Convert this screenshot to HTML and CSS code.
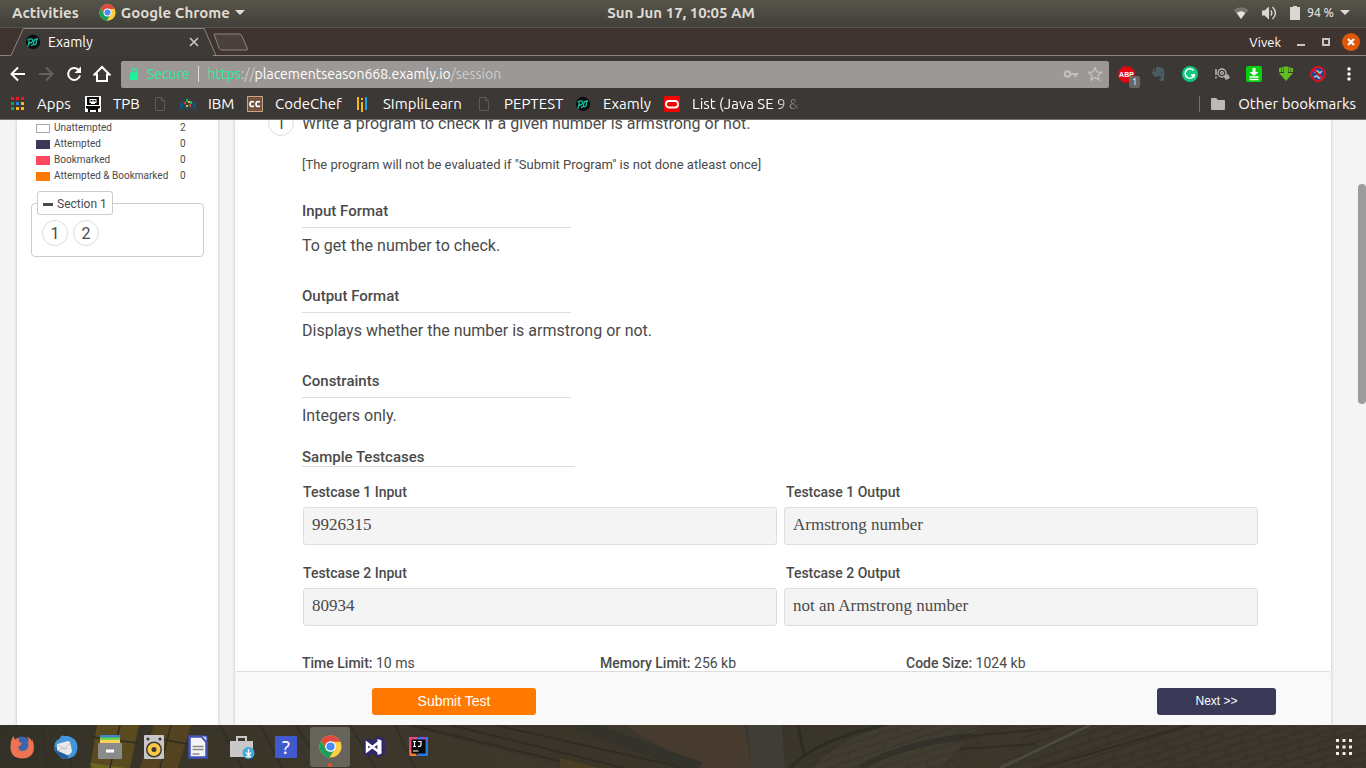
FILE: index.html
```html
<!DOCTYPE html>
<html lang="en">
<head>
<meta charset="utf-8">
<title>Examly</title>
<link rel="stylesheet" href="styles.css">
</head>
<body>
<svg class="defs" aria-hidden="true">
  <symbol id="chrome" viewBox="0 0 24 24">
    <circle cx="12" cy="12" r="11.5" fill="#fcce45"/>
    <path d="M2 6.2A11.5 11.5 0 0 1 22.300 7H12a5 5 0 0 0-4.600 7z" fill="#dd4b3e"/>
    <path d="M2 6.200A11.500 11.500 0 0 0 11 23.500L16.300 14.500A5 5 0 0 1 7.600 14.500z" fill="#1c9f5c"/>
    <circle cx="12" cy="12" r="5.600" fill="#fff"/><circle cx="12" cy="12" r="4.300" fill="#4a8af4"/>
  </symbol>
  <symbol id="examly" viewBox="0 0 16 16">
    <circle cx="8" cy="8" r="7.200" fill="#0b0e10"/>
    <path d="M3 12.300L4.300 7M3 6C4.500 4.500 8 4.300 7.600 6.600C7.300 8.500 5.500 9.300 4 9M6.500 11.300C8.500 11.500 8.700 9.500 8.800 7.500Q9.200 4.800 12.700 4.800M12.500 5C9.800 6.500 12.300 7.500 11.200 9.500Q10.500 11 9 10.500" fill="none" stroke="#19c7a8" stroke-width="1.200" stroke-linecap="round"/>
  </symbol>
  <symbol id="page" viewBox="0 0 16 16"><path d="M3.500 1.500h6l3 3.200v9.800h-9zM9.500 1.500v3.500h3" fill="none" stroke="#5c5a58"/></symbol>
</svg>

<header class="system">
  <div class="system-left">
    <button class="plain">Activities</button>
    <button class="plain app-menu"><svg width="17" height="17"><use href="#chrome"/></svg><span>Google Chrome</span><i class="caret"></i></button>
  </div>
  <time>Sun Jun 17, 10:05 AM</time>
  <div class="system-right">
    <svg width="16" height="16" viewBox="0 0 16 16"><path d="M.5 5Q8-.5 15.500 5L8 14z" fill="#777570"/><path d="M3.700 8Q8 4.500 12.300 8L8 14z" fill="#e4e2dc"/></svg>
    <svg width="16" height="16" viewBox="0 0 16 16" fill="none" stroke="#d9d7d1" stroke-width="1.400"><path d="M1 5.500h2.500L8 1.500v13L3.500 10.500H1z" fill="#d9d7d1" stroke="none"/><path d="M9.800 5.500q2 2.500 0 5M11.500 2q6 6 0 12"/></svg>
    <svg class="battery" width="12" height="16" viewBox="0 0 12 16"><path d="M1 2h3V1h4v1h3v13H1z" fill="#d9d7d1"/></svg>
    <span class="percent">94 %</span><i class="caret"></i>
  </div>
</header>

<div class="tabstrip">
  <svg class="tab-edge" width="24" height="28" viewBox="0 0 24 28"><path d="M11 28L23.500 0H24V28z" fill="#3e3a37"/><path d="M0 27.500H11L23.500 0" fill="none" stroke="#8b8581"/></svg>
  <div class="tab"><svg width="16" height="16"><use href="#examly"/></svg><span>Examly</span>
    <button class="plain" aria-label="Close tab"><svg width="10" height="10" viewBox="0 0 10 10"><path d="M1 1l8 8M9 1L1 9" stroke="#d0cecb" stroke-width="1.500"/></svg></button></div>
  <svg width="14" height="28" viewBox="0 0 14 28"><path d="M0 0L12 28H0z" fill="#3e3a37"/><path d="M0 0L12 27.500H14" fill="none" stroke="#8b8581"/></svg>
  <div class="strip-rest">
    <button class="plain" aria-label="New tab"><svg width="36" height="18" viewBox="0 0 36 18"><path d="M1 1H26q2 0 3 2L34.500 16q0 1-1 1H9q-2 0-3-2z" fill="#4a403d" stroke="#8b8581"/></svg></button>
    <div class="window-controls"><span>Vivek</span>
      <button class="plain" aria-label="Minimize"><svg width="10" height="10"><path d="M1 8h8" stroke="#c7c3be" stroke-width="2"/></svg></button>
      <button class="plain" aria-label="Maximize"><svg width="10" height="10"><path d="M2 2h6v6H2z" fill="none" stroke="#c7c3be" stroke-width="2"/></svg></button>
      <button class="plain" aria-label="Close"><svg width="18" height="18" viewBox="0 0 18 18"><circle cx="9" cy="9" r="9" fill="#df5707"/><path d="M6 6l6 6M12 6l-6 6" stroke="#fff" stroke-width="2.200"/></svg></button>
    </div>
  </div>
</div>

<nav class="toolbar">
  <div class="nav-buttons">
    <button class="plain" aria-label="Back"><svg width="18" height="18" viewBox="0 0 18 18"><path d="M16 9H3M9 2.500L2.500 9 9 15.500" fill="none" stroke="#fff" stroke-width="2"/></svg></button>
    <button class="plain" aria-label="Forward"><svg width="18" height="18" viewBox="0 0 18 18"><path d="M2 9h13M9 2.500L15.500 9 9 15.500" fill="none" stroke="#65615f" stroke-width="2"/></svg></button>
    <button class="plain" aria-label="Reload"><svg width="18" height="18" viewBox="0 0 18 18"><path d="M15 10.500A6 6 0 1 1 13.500 4.800" fill="none" stroke="#fff" stroke-width="2"/><path d="M16 1.500V8H9.500z" fill="#fff"/></svg></button>
    <button class="plain" aria-label="Home"><svg width="18" height="18" viewBox="0 0 18 18"><path d="M1.500 9.500L9 2l7.500 7.500H14V16H4V9.500z" fill="none" stroke="#fff" stroke-width="2"/></svg></button>
  </div>
  <div class="omnibox">
    <svg width="10" height="14" viewBox="0 0 10 14"><path d="M1 5.500h8V13H1z" fill="#1df29a"/><path d="M2.800 6V3.500a2.200 2.200 0 0 1 4.400 0V6" fill="none" stroke="#1df29a" stroke-width="1.300"/></svg>
    <span class="secure">Secure</span><i class="divider"></i>
    <div class="url" role="textbox" aria-label="Address"><span class="scheme">https</span>://<b>placementseason668.examly.io</b>/session</div>
    <svg width="16" height="16" viewBox="0 0 16 16"><circle cx="4.500" cy="8" r="2.800" fill="none" stroke="#c4c2c0" stroke-width="2"/><path d="M7 8h8M12.500 8v3" stroke="#c4c2c0" stroke-width="2.200"/></svg>
    <svg width="16" height="16" viewBox="0 0 16 16"><path d="M8 1.500l1.900 4.300 4.700.5-3.500 3.100 1 4.600L8 11.600 3.900 14l1-4.600L1.400 6.300l4.700-.5z" fill="none" stroke="#c4c2c0" stroke-width="1.300"/></svg>
  </div>
  <div class="extensions">
    <button class="plain abp" aria-label="Ad blocker"><svg width="17" height="17" viewBox="0 0 17 17"><path d="M5 .5h7l4.500 4.500v7L12 16.500H5L.5 12V5z" fill="#e30613"/><text x="8.500" y="11" class="abp-text">ABP</text></svg><span class="badge">1</span></button>
    <button class="plain" aria-label="Evernote"><svg width="16" height="16" viewBox="0 0 16 16"><path d="M2 4.500h3V1.500zM6 1h4q.8 1.300 3.500 1.500 1.500 6 .5 11-.5 1.800-3 1.800-2-.2-1.500-2.500l1.800-.3V11q-2-.3-2.300-1.500-1 1.800-3.500 1.300Q2.500 10 2 5.500h4z" fill="#4c5d62"/><path d="M11 6q1-.3 1.300.8" stroke="#3c3836" fill="none"/></svg></button>
    <button class="plain" aria-label="Grammarly"><svg width="16" height="16" viewBox="0 0 16 16"><circle cx="8" cy="8" r="8" fill="#11c77e"/><path d="M11.500 4.500A4.700 4.700 0 1 0 12.300 9H9" fill="none" stroke="#fff" stroke-width="1.500"/><path d="M12.500 7.500v5.300l-3-3.500z" fill="#fff"/></svg></button>
    <button class="plain" aria-label="Profanity filter"><svg width="18" height="16" viewBox="0 0 18 16"><path d="M3 3v6M3 10.500v2" stroke="#bbb" stroke-width="1.500"/><circle cx="9" cy="7" r="4" fill="none" stroke="#bbb" stroke-width="1.300"/><circle cx="9" cy="7" r="1.600" fill="#777" stroke="#bbb"/><path d="M10 10l5-2 2 4-4 2z" fill="#aaa"/></svg></button>
    <button class="plain" aria-label="Download"><svg width="16" height="16" viewBox="0 0 16 16"><rect width="16" height="16" rx="2" fill="#06cf0c"/><path d="M6.500 2h3v4h3L8 10 3.500 6h3z" fill="#fff"/><path d="M3.500 11h9M3.500 13.500h9" stroke="#fff" stroke-width="1.400"/></svg></button>
    <button class="plain" aria-label="Video download"><svg width="16" height="16" viewBox="0 0 16 16"><path d="M1 2h2v4H1zM13 2h2v4h-2zM3.500 1h2v5h-2zM10.500 1h2v5h-2zM6 .5h4V7H15l-7 8-7-8h5z" fill="#62bd20"/></svg></button>
    <button class="plain" aria-label="Blocker"><svg width="16" height="16" viewBox="0 0 16 16"><circle cx="8" cy="8" r="7" fill="#174b8c"/><path d="M4 6l3-1 3 2 2-2M4 11l3-1 2 2 3-1" fill="none" stroke="#a9cce4" stroke-width="1.600"/><circle cx="8" cy="8" r="7" fill="none" stroke="#e5101f" stroke-width="1.800"/><path d="M3 3l10 10" stroke="#e5101f" stroke-width="2"/></svg></button>
    <button class="plain" aria-label="Menu"><svg width="4" height="16" viewBox="0 0 4 16" fill="#fff"><circle cx="2" cy="3" r="1.700"/><circle cx="2" cy="8" r="1.700"/><circle cx="2" cy="13" r="1.700"/></svg></button>
  </div>
</nav>

<nav class="bookmarks">
  <a href="#"><svg width="16" height="16" viewBox="0 0 16 16"><path d="M2 1h3v3H2zM7 1h3v3H7zM12 1h3v3h-3z" fill="#ef1722"/><path d="M2 6h3v3H2zM2 11h3v3H2z" fill="#11a55c"/><path d="M7 6h3v3H7z" fill="#2384ed"/><path d="M12 6h3v3h-3zM7 11h3v3H7zM12 11h3v3h-3z" fill="#f9b912"/></svg>Apps</a>
  <a href="#"><svg width="16" height="16" viewBox="0 0 16 16"><path d="M0 0h16v16H0z" fill="#fff"/><path d="M2 1h12v8H2zM1 10h14v2l-2 1v3h-2v-2H5v2H3v-3l-2-1z" fill="#080808"/><path d="M4.500 3h7v4h-1.500v1H6V7H4.500z" fill="#fff"/><path d="M5.500 4h2v1.500h-2zM8.500 4h2v1.500h-2zM4 11h8v1H4z"/></svg>TPB</a>
  <a href="#" aria-label="Bookmark"><svg width="16" height="16"><use href="#page"/></svg></a>
  <a href="#"><svg width="16" height="16" viewBox="0 0 16 16"><path d="M0 6l3 1v5l5 1 5-1V7l3-1v7H9l-1 1-1-1H0z" fill="#14527d"/><path d="M3 6l3-2 2-2 2 2 3 2v5l-5 1-5-1z" fill="#1d4a4c"/><path d="M4 6h2v2H4zM9 8h2v3H9z" fill="#e3372e"/><path d="M6 3h2v3H6zM10 5h2v3h-2z" fill="#2eab52"/><path d="M8 5h2v2H8zM6 9h2v2H6z" fill="#f6b323"/></svg>IBM</a>
  <a href="#"><svg width="16" height="16" viewBox="0 0 16 16"><path d="M.5.500h15v15H.5z" fill="#73533e" stroke="#c7a68d"/><path d="M7 6Q3 4.500 3 8t4 2M13 6Q9 4.500 9 8t4 2" fill="none" stroke="#fff" stroke-width="1.800"/></svg>CodeChef</a>
  <a href="#"><svg width="16" height="16" viewBox="0 0 16 16"><path d="M3 1v13M7 6v10" stroke="#f7b717" stroke-width="2"/><path d="M7 2v2" stroke="#f7b717" stroke-width="2"/><path d="M11 1v13" stroke="#1fa4df" stroke-width="2"/></svg>SImpliLearn</a>
  <a href="#"><svg width="16" height="16"><use href="#page"/></svg>PEPTEST</a>
  <a href="#"><svg width="16" height="16"><use href="#examly"/></svg>Examly</a>
  <a href="#" class="faded"><svg width="16" height="16" viewBox="0 0 16 16"><path d="M0 0h16v16H0z" fill="#f80000"/><rect x="2" y="5" width="12" height="6.500" rx="3" fill="none" stroke="#fff" stroke-width="1.800"/></svg>List (Java SE 9 &amp;</a>
  <a href="#" class="other"><svg width="16" height="16" viewBox="0 0 16 16"><path d="M1 3q0-1 1-1h4l2 2h6q1 0 1 1v8q0 1-1 1H2q-1 0-1-1z" fill="#bcbab8"/></svg>Other bookmarks</a>
</nav>

<div class="viewport">
  <aside class="sidebar">
    <table class="legend">
      <tr><td><i class="swatch none"></i></td><th scope="row">Unattempted</th><td>2</td></tr>
      <tr><td><i class="swatch navy"></i></td><th scope="row">Attempted</th><td>0</td></tr>
      <tr><td><i class="swatch pink"></i></td><th scope="row">Bookmarked</th><td>0</td></tr>
      <tr><td><i class="swatch orange"></i></td><th scope="row">Attempted &amp; Bookmarked</th><td>0</td></tr>
    </table>
    <fieldset class="section">
      <legend><button class="section-toggle"><i></i>Section 1</button></legend>
      <div class="numbers"><button class="number">1</button><button class="number">2</button></div>
    </fieldset>
  </aside>
  <main class="main">
    <article class="question">
      <span class="number">1</span>
      <div class="content">
        <p class="title">Write a program to check if a given number is armstrong or not.</p>
        <p class="note">[The program will not be evaluated if "Submit Program" is not done atleast once]</p>
        <section class="block"><h2>Input Format</h2><p>To get the number to check.</p></section>
        <section class="block"><h2>Output Format</h2><p>Displays whether the number is armstrong or not.</p></section>
        <section class="block"><h2>Constraints</h2><p>Integers only.</p></section>
        <h2 class="samples">Sample Testcases</h2>
        <div class="cases">
          <section><h3>Testcase 1 Input</h3><pre>9926315</pre></section>
          <section><h3>Testcase 1 Output</h3><pre>Armstrong number</pre></section>
          <section><h3>Testcase 2 Input</h3><pre>80934</pre></section>
          <section><h3>Testcase 2 Output</h3><pre>not an Armstrong number</pre></section>
        </div>
        <div class="limits">
          <span><b>Time Limit:</b> 10 ms</span><span><b>Memory Limit:</b> 256 kb</span><span><b>Code Size:</b> 1024 kb</span>
        </div>
      </div>
    </article>
    <footer class="actions"><button class="submit">Submit Test</button><button class="next">Next &gt;&gt;</button></footer>
  </main>
  <div class="scrollbar"><i></i></div>
</div>

<footer class="dock">
  <svg class="wallpaper" viewBox="0 0 1366 43" preserveAspectRatio="none" aria-hidden="true">
    <defs>
      <linearGradient id="wall"><stop offset="0" stop-color="#343128"/><stop offset=".2" stop-color="#3b3629"/><stop offset=".38" stop-color="#3d382b"/><stop offset=".55" stop-color="#39372d"/><stop offset="1" stop-color="#3a352c"/></linearGradient>
      <pattern id="bricks" width="36" height="16" patternUnits="userSpaceOnUse" patternTransform="rotate(-18)"><path d="M0 .5h36M0 8.500h36M6 0v8M24 8v8" stroke="#302c25" fill="none"/></pattern>
    </defs>
    <path d="M0 0h1366v43H0z" fill="url(#wall)"/>
    <path d="M97 0h42l-9 43H90z" fill="#594a20"/><path d="M154 0h37l-13 43h-38z" fill="#534320"/>
    <path d="M90 38l37 5h-34z" fill="#6b651f"/>
    <path d="M120 0l-10 43M92 12l45 6M171 0l-11 43M148 12l40 7" stroke="#2f2c20" stroke-width="1.500"/>
    <path d="M0 0l30 43M42 0l5 43M64 0l8 43M220 0l22 43M260 0l22 43M296 0l26 43M350 0l26 43M395 0l20 43" stroke="#322f26" stroke-width="2"/>
    <path d="M400 0l170 43h150L590 0z" fill="#3b3529"/><path d="M410 0l178 43M450 0l174 43M495 0l190 43" stroke="#2e2c23" stroke-width="2"/>
    <path d="M560 33l40 10h-40z" fill="#4a3e24"/>
    <path d="M625 0h120l6 43h-55Z" fill="#473a2e"/><path d="M580 0l120 43" stroke="#33332b" stroke-width="12"/>
    <path d="M748 0h34l3 43h-34z" fill="#3f3e36"/><path d="M782 0h100l-70 43h-27z" fill="#39352b"/><path d="M790 43Q820 12 888 0M798 0l6 30" fill="none" stroke="#2d2b24" stroke-width="3"/>
    <path d="M888 0h92l40 43H812Q840 14 888 0z" fill="#413c30"/><path d="M860 43Q900 18 980 10" fill="none" stroke="#34312a" stroke-width="6"/>
    <path d="M980 0h386v43H940z" fill="#3c362b"/><path d="M835 0h180l-55 43H800z" fill="url(#bricks)" opacity=".5"/><path d="M1030 0h336v43H1000z" fill="url(#bricks)" opacity=".7"/>
    <path d="M1000 43L1090 0" stroke="#484a3b" stroke-width="3"/><path d="M1040 43L1190 0" stroke="#302d25" stroke-width="2"/>
    <path d="M960 12l95-9M960 24l75-5" stroke="#2f2d26" stroke-width="2"/>
  </svg>
  <div class="apps">
    <button class="plain" aria-label="Firefox"><svg width="24" height="24" viewBox="0 0 24 24"><circle cx="12" cy="11" r="9.500" fill="#3b65ad"/><path d="M3.500 1l1.500 4q1.500-2 4-2-.5 3 0 4l3 1q-1 3-3.500 3.500Q8 16 12.500 16t6-5q0-4-2-5l2.500.5Q18.500 3.500 17 1.500q3.500 1.500 5 5l.5-2Q28 23 12 23.500.500 23 .5 12 .500 5 3.500 1z" fill="#ef7351"/></svg></button>
    <button class="plain" aria-label="Thunderbird"><svg width="24" height="24" viewBox="0 0 24 24"><path d="M7 1q2-1 3 0h4q9 2 9.500 11 0 10-9 11.500H8L1 16Q-1 9 3 5q3-1 4-4z" fill="#4394d9"/><path d="M1 12q0 9 9 11.500l5-1-3-3z" fill="#245f99"/><path d="M3 9l11-3 2 1 2 9q-1 4-5 4l-9-4-1-1z" fill="#e9e9ea"/><path d="M4 10l7 4 5-6M4 16l5-3 4 1" fill="none" stroke="#bfc3c8"/></svg></button>
    <button class="plain" aria-label="Files"><svg width="24" height="24" viewBox="0 0 24 24"><path d="M2 0h20v3H2z" fill="#4086c6"/><path d="M2 2.500h20V6H2z" fill="#6bd447"/><path d="M2 5h20v4H2z" fill="#ffd35a"/><path d="M1 8h22q1 0 1 1v14q0 1-1 1H1q-1 0-1-1V9q0-1 1-1z" fill="#8b8b8b"/><path d="M8 14.500h8v3H8z" fill="#fff"/></svg></button>
    <button class="plain" aria-label="Rhythmbox"><svg width="20" height="24" viewBox="0 0 20 24"><rect width="20" height="24" rx="1" fill="#c7c7c7"/><circle cx="4" cy="4" r="1.500" fill="#333"/><circle cx="16" cy="4" r="1.500" fill="#333"/><circle cx="10" cy="14.500" r="8" fill="#3b3b39"/><circle cx="10" cy="14.500" r="4.500" fill="none" stroke="#fac747" stroke-width="4"/></svg></button>
    <button class="plain" aria-label="Writer"><svg width="20" height="24" viewBox="0 0 20 24"><path d="M1.500 1.500h12L18.500 7v15.500h-17z" fill="#f4f4f4" stroke="#4252b6" stroke-width="2.500"/><path d="M13 1h6v6z" fill="#b9c3f5" stroke="#3546aa"/><path d="M4.500 11.500h11M4.500 14.500h11M4.500 19h7" stroke="#888" stroke-width="1.500"/></svg></button>
    <button class="plain" aria-label="Software"><svg width="26" height="24" viewBox="0 0 26 24"><path d="M1 6h23v16H1z" fill="#c8c8c8"/><path d="M8 6V2h9v4" fill="none" stroke="#c8c8c8" stroke-width="2"/><circle cx="19.500" cy="18" r="6" fill="#43a9df"/><path d="M19.500 14v6M17 17.500l2.500 2.500 2.500-2.500M17 21.500h5" fill="none" stroke="#fff" stroke-width="1.300"/></svg></button>
    <button class="plain help" aria-label="Help">?</button>
    <button class="plain active" aria-label="Chrome"><svg width="23" height="23"><use href="#chrome"/></svg></button>
    <button class="plain" aria-label="Visual Studio"><svg width="24" height="22" viewBox="0 0 24 22"><path d="M16 0l7 3v15l-7 4-6-5-4 4-5-4V5l5-3 5 3z" fill="#2f2869"/><path d="M5 7l12 9V6L5 15z" fill="none" stroke="#fff" stroke-width="2.500"/><path d="M15.500 3l4 1.500v13l-4 1.500z" fill="#fff"/></svg></button>
    <button class="plain" aria-label="IntelliJ"><svg width="19" height="19" viewBox="0 0 19 19"><path d="M0 0h10L5 12l2 7H0z" fill="#e94482"/><path d="M8 0h11v19H9z" fill="#237be6"/><path d="M0 12l9 7H2z" fill="#f47b32"/><path d="M11 0h5l3 6z" fill="#a04ac9"/><path d="M2.500 2.500h14v14h-14z" fill="#090909"/><path d="M4 4.500h3M5.500 4.500v5M4 9.500h3M9 4.500h3v3.500q0 1.500-3 1.300M4 14h5.500" fill="none" stroke="#fff" stroke-width="1.200"/></svg></button>
  </div>
  <button class="plain grid" aria-label="Show applications"><svg width="18" height="18" viewBox="0 0 18 18" fill="#eee"><path d="M1 1h3v3H1zM7.500 1h3v3h-3zM14 1h3v3h-3zM1 7.500h3v3H1zM7.500 7.500h3v3h-3zM14 7.500h3v3h-3zM1 14h3v3H1zM7.500 14h3v3h-3zM14 14h3v3h-3z"/></svg></button>
</footer>
</body>
</html>
```

FILE: styles.css
```css
* { box-sizing: border-box; }
body { margin: 0; height: 100vh; display: flex; flex-direction: column; overflow: hidden; font-family: Roboto, sans-serif; color: #4a4a4a; background: #f4f4f4; }
svg { display: block; flex: none; }
p, h2, h3, pre { margin: 0; }
.defs { position: absolute; width: 0; height: 0; }
.plain { border: 0; padding: 0; background: none; color: inherit; font: inherit; display: flex; align-items: center; justify-content: center; }
.system, .tabstrip, .toolbar, .bookmarks { flex: none; font-family: Ubuntu, "Noto Sans", sans-serif; color: #fff; }

.system { height: 28px; padding: 0 16px 2px 12px; display: grid; grid-template-columns: 1fr auto 1fr; align-items: center; background: linear-gradient(#57544a, #403f39); border-bottom: 1px solid #55534d; color: #dfdbd2; font-size: 15px; line-height: 24px; font-weight: 700; }
.system-left, .system-right { display: flex; align-items: center; }
.system-left { gap: 20px; }
.app-menu { gap: 5px; }
.caret { border: 5px solid transparent; border-top-color: #dfdbd2; border-bottom: 0; }
.system-right { justify-content: flex-end; gap: 12px; }
.battery { margin-right: -6px; }
.percent { font-size: 12px; font-weight: 500; margin-right: -6px; }

.tabstrip { height: 28px; display: flex; background: #403431; font-size: 14px; }
.tab { width: 180px; display: flex; align-items: center; gap: 7px; background: #3e3a37; border-top: 1px solid #8b8581; padding: 0 5px 2px 1px; }
.tab button { margin-left: auto; }
.strip-rest { flex: 1; display: flex; align-items: center; justify-content: space-between; border-bottom: 1px solid #8b8581; padding: 0 6px 0 0; margin-left: -5px; }
.window-controls { display: flex; align-items: center; gap: 15px; font-size: 13px; }
.window-controls button:last-child { margin-left: -4px; }

.toolbar { height: 35px; display: flex; align-items: center; background: #3c3836; padding: 1px 2px 0 4px; }
.nav-buttons { display: flex; margin-right: 5px; }
.nav-buttons button { width: 28px; height: 28px; }
.omnibox { flex: 1; height: 27px; border-radius: 2px; background: #9b9895; display: flex; align-items: center; gap: 8px; padding: 0 6px 0 8px; font-size: 14px; color: #cfcdca; }
.secure, .scheme { color: #26f0a0; }
.divider { width: 1px; height: 16px; background: #e0dedc; }
.url { flex: 1; white-space: nowrap; padding-left: 1px; }
.url b { font-weight: 400; color: #fff; }
.extensions { display: flex; margin-left: 1px; }
.extensions button { width: 32px; height: 28px; }
.extensions button:last-child { width: 30px; }
.abp { position: relative; }
.abp-text { font: 700 7px "Liberation Sans", sans-serif; fill: #fff; text-anchor: middle; }
.badge { position: absolute; right: 2px; bottom: 0; width: 11px; height: 12px; border-radius: 2px; background: #666; font-size: 9px; line-height: 12px; }

.bookmarks { height: 29px; display: grid; grid-template-columns: 76px 67px 28px 67px 108px 121px 99px 89px 138px 1fr; align-items: center; padding: 0 10px 2px 9px; background: #3c3836; border-bottom: 1px solid #74706d; font-size: 15px; line-height: 20px; }
.bookmarks a { display: flex; align-items: center; gap: 12px; color: #fff; text-decoration: none; white-space: nowrap; }
.faded { overflow: hidden; -webkit-mask-image: linear-gradient(90deg, #000 80%, transparent); mask-image: linear-gradient(90deg, #000 80%, transparent); }
.bookmarks .other { justify-self: end; border-left: 1px solid #74706d; padding-left: 10px; height: 16px; }

.viewport { flex: 1; min-height: 0; display: flex; gap: 17px; padding-left: 17px; overflow: hidden; }
.sidebar { flex: 0 0 201px; background: #fff; box-shadow: 0 0 3px #bbb; padding: 0 14px 0; }
.legend { border-collapse: collapse; margin-left: 5px; font-size: 10px; line-height: 16px; }
.legend td, .legend th { padding: 0; text-align: left; font-weight: 400; height: 16px; }
.legend td:first-child { width: 18px; }
.legend th { width: 126px; }
.swatch { display: block; width: 14px; height: 9px; }
.none { border: 1px solid #aaa; }
.navy { background: #3a3958; }
.pink { background: #ff4860; }
.orange { background: #ff7900; }
.section { margin: 7px 0 0; padding: 0 10px 10px; border: 1px solid #ccc; border-radius: 4px; display: block; min-width: 0; }
.section legend { padding: 0; margin-left: -5px; margin-bottom: 5px; }
.section-toggle { display: flex; align-items: center; gap: 4px; height: 24px; padding: 2px 5px 0; border: 1px solid #ccc; border-radius: 3px; background: #fff; color: inherit; font: 12px Roboto, sans-serif; }
.section-toggle i { width: 10px; height: 3px; background: #4a4a4a; }
.numbers { display: flex; gap: 5px; }
.number { display: flex; align-items: center; justify-content: center; width: 26px; height: 26px; padding: 0; border: 1px solid #ddd; border-radius: 50%; background: #fff; color: inherit; font: 16px Roboto, sans-serif; }

.main { flex: 1; min-width: 0; display: flex; flex-direction: column; background: #fff; box-shadow: 0 0 3px #bbb; }
.question { flex: 1; min-height: 0; overflow: hidden; display: flex; align-items: flex-start; gap: 8px; padding: 0 73px 0 33px; }
.question > .number { flex: none; margin-top: -10px; }
.content { flex: 1; min-width: 0; margin-top: -8px; }
.title { font-size: 16px; line-height: 24px; margin-bottom: 19px; }
.note { font-size: 13px; line-height: 20px; margin-bottom: 26px; }
h2 { font-size: 15px; font-weight: 500; line-height: 20px; }
.block { height: 85px; font-size: 16px; line-height: 24px; }
.block h2 { width: 269px; height: 27px; border-bottom: 1px solid #ddd; margin-bottom: 6px; }
.samples { margin-top: -9px; width: 273px; border-bottom: 1px solid #ddd; height: 20px; }
.cases { display: grid; grid-template-columns: 1fr 1fr; gap: 17px 7px; padding-left: 1px; margin-top: 15px; }
h3 { font-size: 14px; font-weight: 500; line-height: 20px; margin-bottom: 5px; padding-bottom: 0; }
.cases section:nth-child(even) h3 { padding-left: 2px; }
pre { height: 38px; padding: 0 8px 2px; border: 1px solid #ddd; border-radius: 3px; background: #f4f4f4; font: 17px/34px "Liberation Serif", serif; }
.cases section:nth-child(-n+2) pre { margin-bottom: 1px; }
.limits { display: grid; grid-template-columns: 298fr 306fr 352fr; margin-top: 27px; font-size: 14px; line-height: 20px; }
.limits b { font-weight: 500; }
.actions { flex: none; height: 54px; display: flex; justify-content: space-between; padding: 16px 55px 0 137px; border-top: 1px solid #ddd; border-radius: 3px; background: #f9f9f9; }
.actions button { height: 27px; padding: 0 0 2px; border: 0; border-radius: 3px; color: #fff; font-family: "Liberation Sans", Arial, sans-serif; }
.submit { width: 164px; background: #ff7900; font-size: 14px; }
.next { width: 119px; background: #3a3958; font-size: 12px; }
.scrollbar { flex: none; width: 8px; margin-left: 10px; padding-top: 64px; }
.scrollbar i { display: block; height: 220px; border-radius: 4px; background: #9c9c9c; }

.dock { flex: none; height: 43px; position: relative; display: flex; justify-content: space-between; background: #3b372c; }
.wallpaper { position: absolute; inset: 0; width: 100%; height: 100%; }
.apps { position: relative; display: flex; align-items: center; gap: 4px; padding-left: 2px; }
.apps button { width: 40px; height: 40px; }
.apps .active { position: relative; border-radius: 3px; background: #66645b; }
.active::after { content: ""; position: absolute; bottom: 0; width: 4px; height: 4px; border-radius: 50%; background: #e95420; }
.apps .help { width: 22px; height: 22px; margin: 0 9px; background: #4059cd; color: #fff; font: 18px "Noto Sans", sans-serif; }
.grid { position: relative; width: 44px; }
```
